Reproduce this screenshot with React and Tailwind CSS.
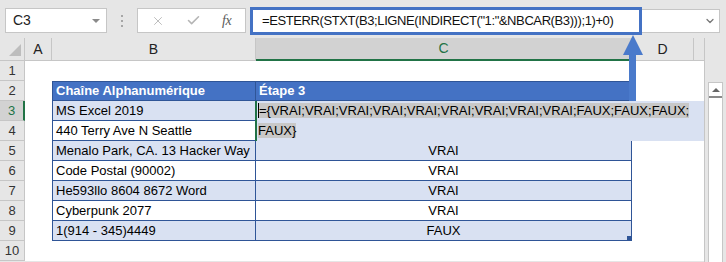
import { X, Check, ChevronDown } from 'lucide-react'

const FORMULA = '=ESTERR(STXT(B3;LIGNE(INDIRECT("1:"&NBCAR(B3)));1)+0)'

// sheet rows 2..9 hold the table, row 2 is the header
const tableRows = {
  2: { b: 'Chaîne Alphanumérique', c: 'Étape 3', head: true },
  3: { b: 'MS Excel 2019', c: '', band: true },
  4: { b: '440 Terry Ave N Seattle', c: '' },
  5: { b: 'Menalo Park, CA. 13 Hacker Way', c: 'VRAI', band: true },
  6: { b: 'Code Postal (90002)', c: 'VRAI' },
  7: { b: 'He593llo 8604 8672 Word', c: 'VRAI', band: true },
  8: { b: 'Cyberpunk 2077', c: 'VRAI' },
  9: { b: '1(914 - 345)4449', c: 'FAUX', band: true },
}

function FormulaBar() {
  return (
    <div className="h-[38px] flex items-start pt-[8px] pl-[5px]">
      {/* Name box */}
      <div className="w-[102px] h-[25px] bg-white border border-[#c6c6c6] flex items-center justify-between pl-[7px] pr-[6px]">
        <span className="text-[14px] text-[#222]">C3</span>
        <span className="w-0 h-0 border-l-[4px] border-r-[4px] border-t-[4px] border-l-transparent border-r-transparent border-t-[#8a8a8a]" />
      </div>

      {/* grip dots */}
      <div className="w-[30px] h-[25px] flex flex-col items-center justify-center gap-[3px]">
        <span className="w-[2px] h-[2px] bg-[#a6a6a6]" />
        <span className="w-[2px] h-[2px] bg-[#a6a6a6]" />
        <span className="w-[2px] h-[2px] bg-[#a6a6a6]" />
      </div>

      {/* cancel / enter / fx */}
      <div className="w-[109px] h-[25px] bg-white border border-[#c6c6c6] flex items-center pl-[13px]">
        <X className="w-[14px] h-[14px] text-[#b5b5b5]" strokeWidth={1.5} />
        <Check className="w-[15px] h-[15px] text-[#b5b5b5] ml-[21px]" strokeWidth={2.5} />
        <span className="ml-[21px] text-[14px] italic text-[#5a5a5a] font-['Liberation_Serif',serif] tracking-[-0.5px]">
          fx
        </span>
      </div>

      {/* formula input */}
      <div className="ml-[4px] -mt-[1px] w-[392px] h-[28px] bg-white border-[3px] border-[#4472c4] flex items-center pl-[9px]">
        <span className="text-[13px] tracking-[-0.4px] text-[#111] whitespace-nowrap">{FORMULA}</span>
      </div>

      {/* expand box */}
      <div className="w-[78px] h-[24px] mt-[1px] bg-white border border-[#c6c6c6] border-l-0 flex items-center justify-end pr-[3px]">
        <ChevronDown className="w-[12px] h-[12px] text-[#777]" strokeWidth={2.5} />
      </div>
    </div>
  )
}

function ColumnHeaders() {
  return (
    <div className="flex h-[23px]">
      <div className="w-[25px] h-full bg-[#e6e6e6] border-r border-b border-[#c6c6c6] flex items-end justify-end pr-[3px] pb-[4px]">
        <svg width="12" height="12" viewBox="0 0 12 12">
          <polygon points="12,0 12,12 0,12" fill="#bdbdbd" />
        </svg>
      </div>
      <div className="w-[27px] h-full border-r border-b border-[#c6c6c6] flex items-center justify-center text-[14px] text-[#222]">A</div>
      <div className="w-[204px] h-full border-r border-b border-[#c6c6c6] flex items-center justify-center text-[14px] text-[#222]">B</div>
      <div className="w-[376px] h-full bg-[#d2d2d2] border-r border-[#c6c6c6] border-b-2 border-b-[#217346] flex items-center justify-center text-[14px] text-[#217346]">C</div>
      <div className="w-[62px] h-full border-r border-b border-[#c6c6c6] flex items-center justify-center text-[14px] text-[#222]">D</div>
      <div className="w-[10px] h-full border-b border-[#c6c6c6]" />
    </div>
  )
}

function SheetRow({ n }) {
  const t = tableRows[n]
  const active = n === 3
  const fill = t ? (t.head ? 'bg-[#4472c4] text-white font-bold' : t.band ? 'bg-[#d9e1f2]' : 'bg-white') : 'bg-white'
  const edge = t ? 'border-b border-r border-[#2f5597]' : ''
  const top = t && t.head ? 'border-t' : ''

  return (
    <div className="flex h-[20px]">
      <div
        className={
          active
            ? 'w-[25px] h-full bg-[#d2d2d2] border-b border-[#c6c6c6] border-r-2 border-r-[#217346] flex items-center justify-center text-[13px] text-[#217346]'
            : 'w-[25px] h-full bg-[#e6e6e6] border-b border-r border-[#c6c6c6] flex items-center justify-center text-[13px] text-[#333]'
        }
      >
        {n}
      </div>
      <div className="w-[27px] h-full bg-white" />
      <div className={`w-[204px] h-full ${fill} ${edge} ${top} ${t ? 'border-l' : ''} flex items-center pl-[3px] text-[13px] whitespace-nowrap`}>
        {t ? t.b : ''}
      </div>
      <div
        className={`w-[376px] h-full ${fill} ${edge} ${top} flex items-center text-[13px] relative ${
          t && !t.head ? 'justify-center' : 'pl-[3px]'
        }`}
      >
        {t ? t.c : ''}
        {n === 9 && <span className="absolute right-0 bottom-0 w-[4px] h-[4px] bg-[#2f5597]" />}
      </div>
      <div className="w-[62px] h-full bg-white" />
      <div className="w-[10px] h-full bg-white" />
    </div>
  )
}

function ScrollBar() {
  return (
    <div className="w-[22px] border-l border-[#c6c6c6] pt-[44px] pl-[3px]">
      <div className="w-[15px] h-[218px] bg-white border border-[#c6c6c6]">
        <div className="h-[15px] border-b-2 border-[#8a8a8a] flex items-center justify-center">
          <span className="w-0 h-0 border-l-[4px] border-r-[4px] border-b-[4px] border-l-transparent border-r-transparent border-b-[#666]" />
        </div>
      </div>
    </div>
  )
}

export default function App() {
  return (
    <div className="w-[726px] h-[262px] bg-[#e6e6e6] overflow-hidden relative font-['Liberation_Sans',Arial,sans-serif] text-black">
      <FormulaBar />
      <div className="flex">
        <div className="w-[704px]">
          <ColumnHeaders />
          {[1, 2, 3, 4, 5, 6, 7, 8, 9, 10].map((n) => (
            <SheetRow key={n} n={n} />
          ))}
        </div>
        <ScrollBar />
      </div>

      {/* in-cell editor over C3:C4 */}
      <div className="absolute left-[255px] top-[101px] w-[449px] h-[40px] bg-[#d9e1f2] border-l-2 border-[#217346] text-[13px] leading-[20px] pl-[1px]">
        <div>
          <span className="bg-[#c8c8c8] border-l border-black">
            ={'{'}VRAI;VRAI;VRAI;VRAI;VRAI;VRAI;VRAI;VRAI;VRAI;FAUX;FAUX;FAUX;
          </span>
        </div>
        <div>
          <span className="bg-[#c8c8c8]">FAUX{'}'}</span>
        </div>
      </div>

      {/* arrow pointing at the formula */}
      <svg className="absolute left-[620px] top-[34px]" width="26" height="67" viewBox="0 0 26 67">
        <polygon points="13,1 23,21 3,21" fill="#4a7acb" />
        <rect x="9" y="20" width="7" height="47" fill="#4a7acb" />
      </svg>
    </div>
  )
}
